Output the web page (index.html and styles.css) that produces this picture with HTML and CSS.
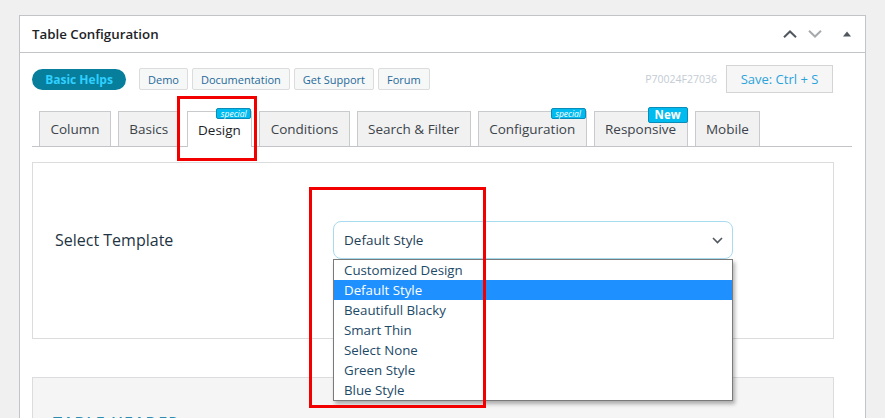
FILE: index.html
```html
<!DOCTYPE html>
<html>
<head>
<meta charset="utf-8">
<link rel="stylesheet" href="styles.css">
</head>
<body>
<div class="page">
  <div class="panel">
    <div class="panel-head">
      <h2 class="panel-title">Table Configuration</h2>
      <div class="head-actions">
        <svg class="ico-up" width="14" height="8" viewBox="0 0 14 8"><polyline points="1,7.2 7,1.5 13,7.2" fill="none" stroke="#50575e" stroke-width="2"/></svg>
        <svg class="ico-down" width="14" height="8" viewBox="0 0 14 8"><polyline points="1,0.8 7,6.5 13,0.8" fill="none" stroke="#a7aaad" stroke-width="2"/></svg>
        <svg class="ico-tri" width="8" height="6" viewBox="0 0 8 6"><polygon points="0,5.5 4,0.5 8,5.5" fill="#50575e"/></svg>
      </div>
    </div>
    <div class="panel-body">
      <div class="toolbar">
        <a class="pill">Basic Helps</a>
        <div class="links">
          <a class="btn">Demo</a>
          <a class="btn">Documentation</a>
          <a class="btn">Get Support</a>
          <a class="btn">Forum</a>
        </div>
        <span class="spacer"></span>
        <span class="code">P70024F27036</span>
        <button class="save">Save: Ctrl + S</button>
      </div>
      <div class="tabs">
        <div class="tab">Column</div>
        <div class="tab">Basics</div>
        <div class="tab active">Design<span class="badge special">special</span></div>
        <div class="tab">Conditions</div>
        <div class="tab">Search &amp; Filter</div>
        <div class="tab">Configuration<span class="badge special">special</span></div>
        <div class="tab">Responsive<span class="badge new">New</span></div>
        <div class="tab">Mobile</div>
      </div>
      <div class="card">
        <div class="field-row">
          <label class="field-label">Select Template</label>
          <div class="select-wrap">
            <div class="select">
              <span>Default Style</span>
              <svg width="11" height="7" viewBox="0 0 11 7"><polyline points="1,1 5.5,5.5 10,1" fill="none" stroke="#50575e" stroke-width="1.6"/></svg>
            </div>
            <ul class="options">
              <li>Customized Design</li>
              <li class="selected">Default Style</li>
              <li>Beautifull Blacky</li>
              <li>Smart Thin</li>
              <li>Select None</li>
              <li>Green Style</li>
              <li>Blue Style</li>
            </ul>
          </div>
        </div>
      </div>
      <div class="card card-gray">
        <h3 class="section-title">TABLE HEADER</h3>
      </div>
    </div>
  </div>
  <div class="mark mark-tab"></div>
  <div class="mark mark-list"></div>
</div>
</body>
</html>
```
FILE: styles.css
```css
html, body {
  margin: 0;
  height: 418px;
  overflow: hidden;
}
body {
  background: #f0f0f1;
  font-family: "Open Sans", "Noto Sans", sans-serif;
  color: #2c3338;
}
.page {
  position: relative;
  padding: 15px 0 0 19px;
}
.panel {
  width: 845px;
  background: #fff;
  border: 1px solid #c3c4c7;
  min-height: 420px;
}
.panel-head {
  height: 36px;
  border-bottom: 1px solid #c3c4c7;
  display: flex;
  align-items: center;
  padding: 0 14px 0 12px;
}
.panel-title {
  margin: 0;
  font-size: 13.3px;
  font-weight: 600;
  color: #1d2327;
  flex: 1;
}
.head-actions {
  display: flex;
  align-items: center;
}
.ico-down { margin-left: 11px; }
.ico-tri { margin-left: 21px; }

.panel-body {
  padding: 12px 13px 0 12px;
}
.toolbar {
  display: flex;
  align-items: center;
  height: 28px;
  margin-right: 19px;
}
.pill {
  display: inline-flex;
  align-items: center;
  justify-content: center;
  width: 94px;
  height: 21px;
  border-radius: 11px;
  background: #077e9c;
  color: #2fd0ff;
  font-size: 12px;
  font-weight: 700;
}
.links {
  display: flex;
  gap: 4px;
  margin-left: 13px;
}
.btn {
  display: inline-flex;
  align-items: center;
  height: 20px;
  padding: 0 8px;
  background: #f6f7f7;
  border: 1px solid #dcdcde;
  border-radius: 2px;
  color: #1e6a9a;
  font-size: 11px;
}
.spacer { flex: 1; }
.code {
  color: #c3ccd4;
  font-size: 10.5px;
  margin-right: 9px;
}
.save {
  width: 107px;
  height: 28px;
  background: #f6f6f6;
  border: 1px solid #d4d4d4;
  color: #2aa3dc;
  font-family: inherit;
  font-size: 13px;
  padding: 0;
}

.tabs {
  margin-top: 18px;
  display: flex;
  align-items: flex-end;
  gap: 7px;
  padding-left: 7px;
  border-bottom: 1px solid #c3c4c7;
  height: 35px;
}
.tab {
  position: relative;
  height: 34px;
  display: flex;
  align-items: center;
  padding: 0 10.4px;
  background: #f1f1f1;
  border: 1px solid #c9cacc;
  border-bottom: none;
  font-size: 13.5px;
  color: #3c434a;
}
.tab.active {
  background: #fff;
  color: #1d2327;
  height: 35px;
  margin-bottom: -1px;
}
.badge {
  position: absolute;
  color: #fff;
  background: #00bbef;
  border: 1px solid #0a8cb8;
  border-radius: 2px;
  text-align: center;
  box-sizing: border-box;
}
.badge.special {
  top: -4px;
  right: 0;
  width: 35px;
  height: 11px;
  font-size: 8.5px;
  line-height: 9px;
  font-style: italic;
}
.badge.new {
  top: -5px;
  right: -1px;
  width: 40px;
  height: 16px;
  font-size: 11.5px;
  line-height: 14px;
  font-weight: 700;
}

.card {
  margin-top: 15px;
  width: 800px;
  border: 1px solid #dcdcde;
  background: #fff;
}
.field-row {
  display: flex;
  align-items: center;
  padding: 58px 0 79px 22px;
}
.field-label {
  width: 278px;
  font-size: 16px;
  color: #1f3443;
}
.select-wrap {
  position: relative;
  width: 400px;
}
.select {
  height: 38px;
  box-sizing: border-box;
  border: 1px solid #a8dbef;
  border-radius: 8px;
  display: flex;
  align-items: center;
  justify-content: space-between;
  padding: 0 9px 0 10px;
  font-size: 13.5px;
  color: #1f3f58;
}
.options {
  position: absolute;
  top: 38px;
  left: 0;
  width: 400px;
  box-sizing: border-box;
  margin: 0;
  padding: 0;
  list-style: none;
  background: #fff;
  border: 1px solid #7a7a7a;
  box-shadow: 2px 3px 4px rgba(0,0,0,0.3);
  z-index: 2;
}
.options li {
  height: 20px;
  line-height: 20px;
  padding-left: 10px;
  font-size: 13.3px;
  color: #1d4a68;
}
.options li.selected {
  background: #1e90ff;
  color: #fff;
}
.card-gray {
  margin-top: 38px;
  background: #f5f5f5;
  height: 80px;
}
.section-title {
  margin: 0;
  padding: 34px 0 0 20px;
  font-size: 16px;
  font-weight: 600;
  letter-spacing: 1px;
  color: #2e8bb0;
}

.mark {
  position: absolute;
  border: 3px solid #f20000;
  box-sizing: border-box;
  z-index: 5;
}
.mark-tab {
  left: 177px;
  top: 96px;
  width: 80px;
  height: 65px;
}
.mark-list {
  left: 309px;
  top: 187px;
  width: 177px;
  height: 221px;
}
```
